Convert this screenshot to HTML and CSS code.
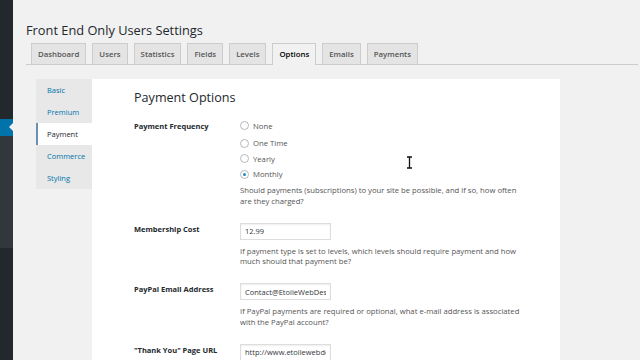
FILE: index.html
```html
<!DOCTYPE html>
<html lang="en">
<head>
    <meta charset="UTF-8">
    <meta name="viewport" content="width=device-width, initial-scale=1.0">
    <title>Front End Only Users Settings</title>
    <link rel="stylesheet" href="styles.css">
</head>
<body>
    <!-- Admin menu strip -->
    <div class="adminmenu">
        <div class="menu-top"></div>
        <div class="menu-current"></div>
        <div class="menu-sub"></div>
        <div class="menu-rest"></div>
    </div>

    <div class="wrap">
        <h1 class="page-title">Front End Only Users Settings</h1>

        <nav class="tab-wrapper">
            <a class="nav-tab" href="#">Dashboard</a>
            <a class="nav-tab" href="#">Users</a>
            <a class="nav-tab" href="#">Statistics</a>
            <a class="nav-tab" href="#">Fields</a>
            <a class="nav-tab" href="#">Levels</a>
            <a class="nav-tab active" href="#">Options</a>
            <a class="nav-tab" href="#">Emails</a>
            <a class="nav-tab" href="#">Payments</a>
        </nav>

        <div class="settings-body">
            <!-- Vertical option tabs -->
            <ul class="vtabs">
                <li><a href="#">Basic</a></li>
                <li><a href="#">Premium</a></li>
                <li class="current"><a href="#">Payment</a></li>
                <li><a href="#">Commerce</a></li>
                <li><a href="#">Styling</a></li>
            </ul>

            <div class="panel">
                <h2 class="panel-title">Payment Options</h2>

                <div class="form-table">
                    <div class="form-row">
                        <div class="row-label">Payment Frequency</div>
                        <div class="row-field">
                            <label class="radio"><input type="radio" name="freq"> None</label>
                            <label class="radio"><input type="radio" name="freq"> One Time</label>
                            <label class="radio"><input type="radio" name="freq"> Yearly</label>
                            <label class="radio"><input type="radio" name="freq" checked> Monthly</label>
                            <p class="description">Should payments (subscriptions) to your site be possible, and if so, how often are they charged?</p>
                        </div>
                    </div>

                    <div class="form-row">
                        <div class="row-label">Membership Cost</div>
                        <div class="row-field">
                            <input class="text-input" type="text" value="12.99">
                            <p class="description">If payment type is set to levels, which levels should require payment and how much should that payment be?</p>
                        </div>
                    </div>

                    <div class="form-row">
                        <div class="row-label">PayPal Email Address</div>
                        <div class="row-field">
                            <input class="text-input" type="text" value="Contact@EtoileWebDesign.com">
                            <p class="description">If PayPal payments are required or optional, what e-mail address is associated with the PayPal account?</p>
                        </div>
                    </div>

                    <div class="form-row">
                        <div class="row-label">"Thank You" Page URL</div>
                        <div class="row-field">
                            <input class="text-input" type="text" value="http://www.etoilewebdesign.com/thank-you/">
                        </div>
                    </div>
                </div>
            </div>
        </div>
    </div>

    <!-- mouse cursor -->
    <svg class="cursor" width="7" height="13" viewBox="0 0 7 13">
        <path d="M1 1h5M3.5 1v11M1 12h5" stroke="#111" stroke-width="1.3" fill="none"/>
    </svg>
</body>
</html>
```

FILE: styles.css
```css
html, body {
    height: 100%;
}

body {
    margin: 0;
    display: flex;
    background-color: #f1f1f1;
    font-family: "Open Sans", Arial, sans-serif;
    color: #23282d;
    overflow: hidden;
}

/* Admin menu strip */
.adminmenu {
    width: 13px;
    display: flex;
    flex-direction: column;
    flex-shrink: 0;
}

.menu-top {
    height: 119px;
    background-color: #23282d;
}

.menu-current {
    height: 17px;
    background-color: #0073aa;
    position: relative;
}

.menu-current::after {
    content: "";
    position: absolute;
    right: 0;
    top: 4px;
    border: 4px solid transparent;
    border-right-color: #f1f1f1;
}

.menu-sub {
    height: 112px;
    background-color: #32373c;
}

.menu-rest {
    flex: 1;
    background-color: #23282d;
}

/* Main area */
.wrap {
    flex: 1;
    padding: 0 2px 0 13px;
    display: flex;
    flex-direction: column;
}

.page-title {
    margin: 21px 0 0;
    font-size: 12.8px;
    font-weight: 400;
    line-height: 18px;
    color: #23282d;
}

.tab-wrapper {
    display: flex;
    gap: 6px;
    margin-top: 4px;
    padding-left: 5px;
    border-bottom: 1px solid #ccc;
}

.nav-tab {
    padding: 0 6px;
    height: 20px;
    line-height: 20px;
    font-size: 7.8px;
    font-weight: 600;
    color: #555;
    text-decoration: none;
    background-color: #e4e4e4;
    border: 1px solid #ccc;
    border-bottom: none;
}

.nav-tab.active {
    background-color: #f1f1f1;
    color: #000;
    margin-bottom: -1px;
    height: 21px;
}

/* Body: vertical tabs + panel */
.settings-body {
    flex: 1;
    display: flex;
    margin: 14px 0 0 10px;
}

.vtabs {
    list-style: none;
    margin: 0;
    padding: 0;
    width: 56px;
    height: 110px;
    background-color: #e8e8e8;
}

.vtabs li {
    height: 22px;
    line-height: 22px;
    font-size: 7.5px;
    padding-left: 11px;
}

.vtabs a {
    color: #0073aa;
    text-decoration: none;
}

.vtabs li.current {
    background-color: #fff;
    border-left: 2px solid #6a8fb0;
    padding-left: 9px;
}

.vtabs li.current a {
    color: #23282d;
}

.panel {
    width: 426px;
    padding-left: 42px;
    background-color: #fff;
}

.panel-title {
    margin: 9px 0 0;
    font-size: 12.6px;
    font-weight: 400;
    line-height: 20px;
    color: #23282d;
}

.form-table {
    margin-top: 12px;
}

.form-row {
    display: flex;
    margin-bottom: 16px;
}

.row-label {
    width: 106px;
    font-size: 7.5px;
    font-weight: 700;
    line-height: 12px;
}

.row-field {
    width: 286px;
}

.radio {
    display: flex;
    align-items: center;
    gap: 4px;
    height: 15.5px;
    margin-top: -2px;
    margin-bottom: 2px;
    font-size: 7.7px;
    color: #555;
}

.radio + .radio {
    margin-top: 0;
    margin-bottom: 0;
}

.radio input {
    appearance: none;
    margin: 0;
    width: 9px;
    height: 9px;
    border: 1px solid #b4b9be;
    border-radius: 50%;
    background-color: #fff;
    box-sizing: border-box;
    position: relative;
}

.radio input:checked::after {
    content: "";
    position: absolute;
    left: 2px;
    top: 2px;
    width: 3px;
    height: 3px;
    border-radius: 50%;
    background-color: #1e8cbe;
}

.description {
    margin: 3px 0 0;
    font-size: 7.7px;
    line-height: 10.8px;
    color: #555;
}

.text-input {
    display: block;
    box-sizing: border-box;
    width: 91px;
    height: 17px;
    margin: 0;
    padding: 0 4px;
    font-family: "Open Sans", Arial, sans-serif;
    font-size: 7.5px;
    color: #32373c;
    border: 1px solid #ddd;
    box-shadow: inset 0 1px 2px rgba(0, 0, 0, 0.07);
    background-color: #fff;
}

.text-input + .description {
    margin-top: 6px;
}

.cursor {
    position: absolute;
    left: 406px;
    top: 156px;
}
```
